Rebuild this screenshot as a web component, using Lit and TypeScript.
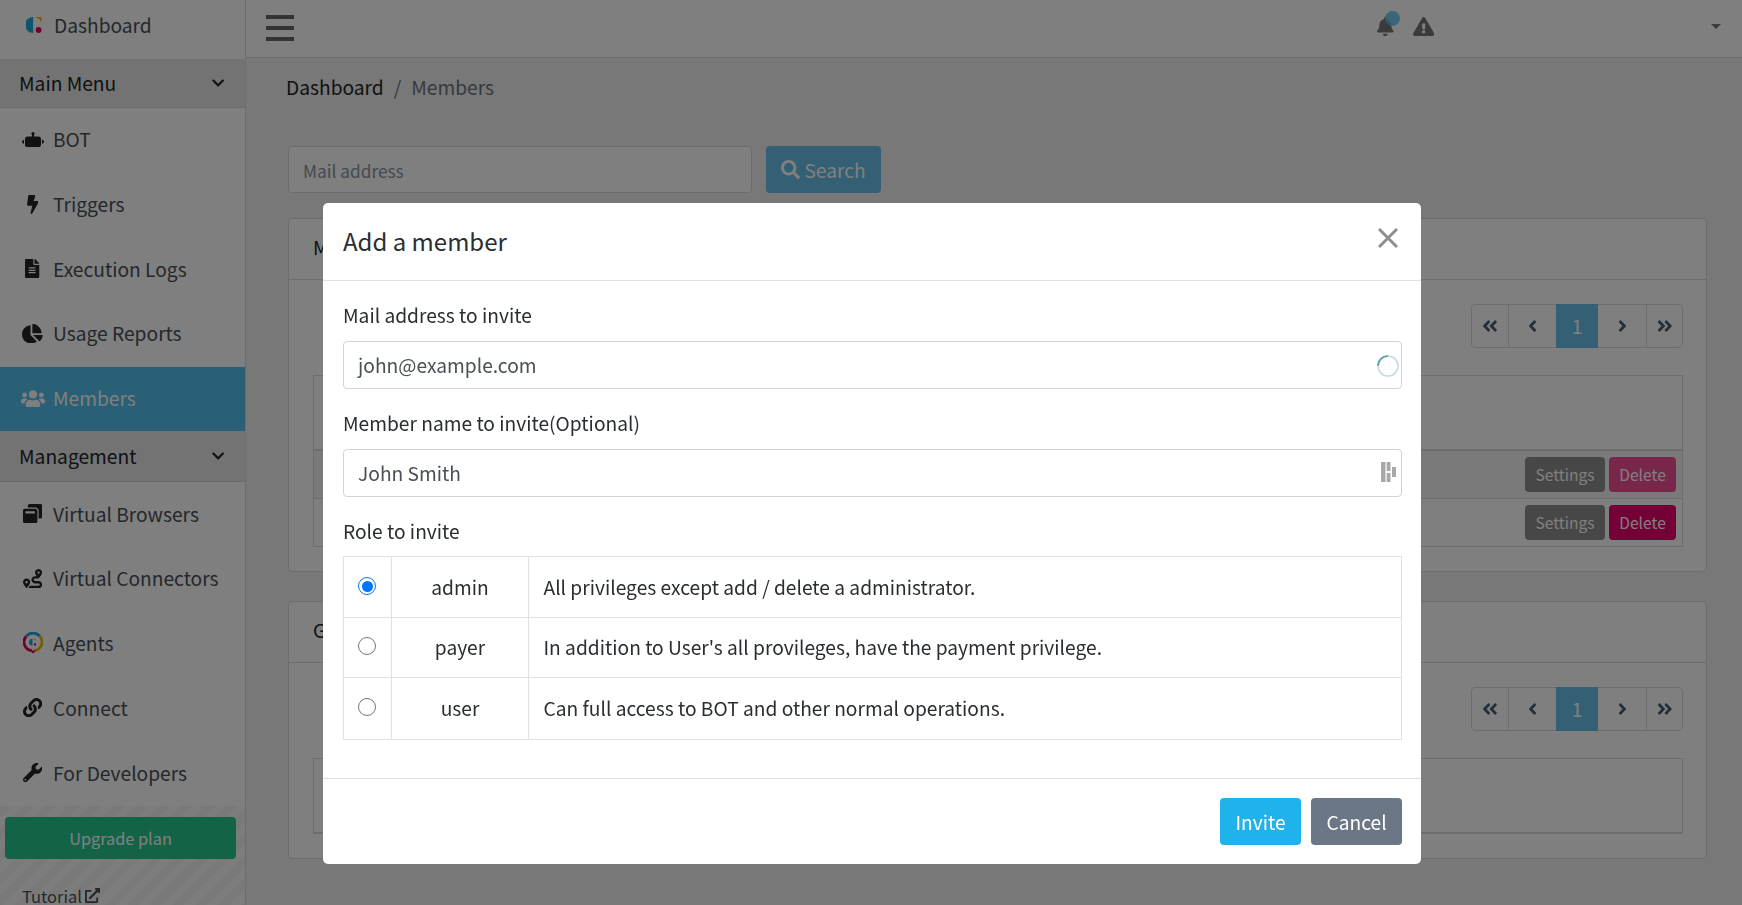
import { LitElement, html, css } from "lit";
import { customElement } from "lit/decorators.js";

const P: Record<string, [number, string]> = {
  chevron: [448, "M207.029 381.476L12.686 187.132c-9.373-9.373-9.373-24.569 0-33.941l22.667-22.667c9.357-9.357 24.522-9.375 33.901-.04L224 284.505l154.745-154.021c9.379-9.335 24.544-9.317 33.901.04l22.667 22.667c9.373 9.373 9.373 24.569 0 33.941L240.971 381.476c-9.373 9.372-24.569 9.372-33.942 0z"],
  bell: [448, "M224 512c35.32 0 63.97-28.65 63.97-64H160.03c0 35.35 28.65 64 63.97 64zm215.39-149.71c-19.32-20.76-55.47-51.99-55.47-154.29 0-77.7-54.48-139.9-127.94-155.16V32c0-17.67-14.32-32-31.98-32s-31.98 14.33-31.98 32v20.84C118.56 68.1 64.08 130.3 64.08 208c0 102.3-36.15 133.53-55.47 154.29-6 6.45-8.66 14.16-8.61 21.71.11 16.4 12.98 32 32.1 32h383.8c19.12 0 32-15.6 32.1-32 .05-7.55-2.61-15.27-8.61-21.71z"],
  warn: [576, "M569.517 440.013C587.975 472.007 564.806 512 527.94 512H48.054c-36.937 0-59.999-40.055-41.577-71.987L246.423 23.985c18.467-32.009 64.72-31.951 83.154 0l239.94 416.028zM288 354c-25.405 0-46 20.595-46 46s20.595 46 46 46 46-20.595 46-46-20.595-46-46-46zm-43.673-165.346l7.418 136c.347 6.364 5.609 11.346 11.982 11.346h48.546c6.373 0 11.635-4.982 11.982-11.346l7.418-136c.375-6.874-5.098-12.654-11.982-12.654h-63.383c-6.884 0-12.356 5.78-11.981 12.654z"],
  bolt: [320, "M296 160H180.6l42.6-129.8C227.2 15 215.7 0 200 0H56C44 0 33.8 8.9 32.2 20.8l-32 240C-1.7 275.2 9.5 288 24 288h118.7L96.6 482.5c-3.6 15.2 8 29.5 23.3 29.5 8.4 0 16.4-4.4 20.8-12l176-304c9.3-15.9-2.2-36-20.7-36z"],
  file: [384, "M224 136V0H24C10.7 0 0 10.7 0 24v464c0 13.3 10.7 24 24 24h336c13.3 0 24-10.7 24-24V160H248c-13.2 0-24-10.8-24-24zm64 236c0 6.6-5.4 12-12 12H108c-6.6 0-12-5.4-12-12v-8c0-6.6 5.4-12 12-12h168c6.6 0 12 5.4 12 12v8zm0-64c0 6.6-5.4 12-12 12H108c-6.6 0-12-5.4-12-12v-8c0-6.6 5.4-12 12-12h168c6.6 0 12 5.4 12 12v8zm0-72v8c0 6.6-5.4 12-12 12H108c-6.6 0-12-5.4-12-12v-8c0-6.6 5.4-12 12-12h168c6.6 0 12 5.4 12 12zm96-114.1v6.1H256V0h6.1c6.4 0 12.5 2.5 17 7l97.9 98c4.5 4.5 7 10.6 7 16.9z"],
  pie: [544, "M527.79 288H290.5l158.03 158.03c6.04 6.04 15.98 6.53 22.19.68 38.7-36.46 65.32-85.61 73.13-140.86 1.34-9.46-6.51-17.85-16.06-17.85zm-15.83-64.8C503.72 103.74 408.26 8.28 288.8.04 279.68-.59 272 7.1 272 16.24V240h223.77c9.14 0 16.82-7.68 16.19-16.8zM224 288V50.71c0-9.55-8.39-17.4-17.84-16.06C86.99 51.49-4.1 155.6.14 280.37 4.5 408.51 114.83 513.59 243.03 511.98c50.4-.63 96.97-16.87 135.26-44.03 7.9-5.6 8.42-17.23 1.57-24.08L224 288z"],
  users: [640, "M96 224c35.3 0 64-28.7 64-64s-28.7-64-64-64-64 28.7-64 64 28.7 64 64 64zm448 0c35.3 0 64-28.7 64-64s-28.7-64-64-64-64 28.7-64 64 28.7 64 64 64zm32 32h-64c-17.6 0-33.5 7.1-45.1 18.6 40.3 22.1 68.9 62 75.1 109.4h66c17.7 0 32-14.3 32-32v-32c0-35.3-28.7-64-64-64zm-256 0c61.9 0 112-50.1 112-112S381.9 32 320 32 208 82.1 208 144s50.1 112 112 112zm76.8 32h-8.3c-20.8 10-43.9 16-68.5 16s-47.6-6-68.5-16h-8.3C179.6 288 128 339.6 128 403.2V432c0 26.5 21.5 48 48 48h288c26.5 0 48-21.5 48-48v-28.8c0-63.6-51.6-115.2-115.2-115.2zm-223.7-13.4C161.5 263.1 145.6 256 128 256H64c-35.3 0-64 28.7-64 64v32c0 17.7 14.3 32 32 32h65.9c6.3-47.4 34.9-87.3 75.2-109.4z"],
  wrench: [512, "M507.73 109.1c-2.24-9.03-13.54-12.09-20.12-5.51l-74.36 74.36-67.88-11.31-11.31-67.88 74.36-74.36c6.62-6.62 3.43-17.9-5.66-20.16-47.38-11.74-99.55.91-136.58 37.93-39.64 39.64-50.55 97.1-34.05 147.2L18.74 402.76c-24.99 24.99-24.99 65.51 0 90.5 24.99 24.99 65.51 24.99 90.5 0l213.21-213.21c50.12 16.71 107.47 5.68 147.37-34.22 37.07-37.07 49.7-89.32 37.91-136.73zM64 472c-13.25 0-24-10.75-24-24 0-13.26 10.75-24 24-24s24 10.74 24 24c0 13.25-10.75 24-24 24z"],
  link: [512, "M326.612 185.391c59.747 59.809 58.927 155.698.36 214.59-.11.12-.24.25-.36.37l-67.2 67.2c-59.27 59.27-155.699 59.262-214.96 0-59.27-59.26-59.27-155.7 0-214.96l37.106-37.106c9.84-9.84 26.786-3.3 27.294 10.606.648 17.722 3.826 35.527 9.69 52.721 1.986 5.822.567 12.262-3.783 16.612l-13.087 13.087c-28.026 28.026-28.905 73.66-1.155 101.96 28.024 28.579 74.086 28.749 102.325.51l67.2-67.19c28.191-28.191 28.073-73.757 0-101.83-3.701-3.694-7.429-6.564-10.341-8.569a16.037 16.037 0 0 1-6.947-12.606c-.396-10.567 3.348-21.456 11.698-29.806l21.054-21.055c5.521-5.521 14.182-6.199 20.584-1.731a152.482 152.482 0 0 1 20.522 17.197zM467.547 44.449c-59.261-59.262-155.69-59.27-214.96 0l-67.2 67.2c-.12.12-.25.25-.36.37-58.566 58.892-59.387 154.781.36 214.59a152.454 152.454 0 0 0 20.521 17.196c6.402 4.468 15.064 3.789 20.584-1.731l21.054-21.055c8.35-8.35 12.094-19.239 11.698-29.806a16.037 16.037 0 0 0-6.947-12.606c-2.912-2.005-6.64-4.875-10.341-8.569-28.073-28.073-28.191-73.639 0-101.83l67.2-67.19c28.239-28.239 74.3-28.069 102.325.51 27.75 28.3 26.872 73.934-1.155 101.96l-13.087 13.087c-4.35 4.35-5.769 10.79-3.783 16.612 5.864 17.194 9.042 34.999 9.69 52.721.509 13.906 17.454 20.446 27.294 10.606l37.106-37.106c59.271-59.259 59.271-155.699.001-214.959z"],
  search: [512, "M505 442.7L405.3 343c-4.5-4.5-10.6-7-17-7H372c27.6-35.3 44-79.7 44-128C416 93.1 322.9 0 208 0S0 93.1 0 208s93.1 208 208 208c48.3 0 92.7-16.4 128-44v16.3c0 6.4 2.5 12.5 7 17l99.7 99.7c9.4 9.4 24.6 9.4 33.9 0l28.3-28.3c9.4-9.4 9.4-24.6.1-34zM208 336c-70.7 0-128-57.2-128-128 0-70.7 57.2-128 128-128 70.7 0 128 57.2 128 128 0 70.7-57.2 128-128 128z"],
  win: [512, "M512 48v288c0 26.5-21.5 48-48 48h-48V176c0-44.1-35.9-80-80-80H128V48c0-26.5 21.5-48 48-48h288c26.5 0 48 21.5 48 48zM384 176v288c0 26.5-21.5 48-48 48H48c-26.5 0-48-21.5-48-48V176c0-26.5 21.5-48 48-48h288c26.5 0 48 21.5 48 48zm-68 28c0-6.6-5.4-12-12-12H76c-6.6 0-12 5.4-12 12v52h252v-52z"],
  route: [512, "M416 320h-96c-17.6 0-32-14.4-32-32s14.4-32 32-32h96s96-107 96-160-43-96-96-96-96 43-96 96c0 25.5 22.2 63.4 45.3 96H320c-52.9 0-96 43.1-96 96s43.1 96 96 96h96c17.6 0 32 14.4 32 32s-14.4 32-32 32H185.5c-16 24.8-33.8 47.7-47.3 64H416c52.9 0 96-43.1 96-96s-43.1-96-96-96zm0-256c17.7 0 32 14.3 32 32s-14.3 32-32 32-32-14.3-32-32 14.3-32 32-32zM96 256c-53 0-96 43-96 96s96 160 96 160 96-107 96-160-43-96-96-96zm0 128c-17.7 0-32-14.3-32-32s14.3-32 32-32 32 14.3 32 32-14.3 32-32 32z"],
  ext: [512, "M432,320H400a16,16,0,0,0-16,16V448H64V128H208a16,16,0,0,0,16-16V80a16,16,0,0,0-16-16H48A48,48,0,0,0,0,112V464a48,48,0,0,0,48,48H400a48,48,0,0,0,48-48V336A16,16,0,0,0,432,320ZM488,0h-128c-21.37,0-32.05,25.91-17,41l35.73,35.73L135,320.37a24,24,0,0,0,0,34L157.67,377a24,24,0,0,0,34,0L435.28,133.32,471,169c15,15,41,4.5,41-17V24A24,24,0,0,0,488,0Z"],
  dbl: [448, "M223.7 239l136-136c9.4-9.4 24.6-9.4 33.9 0l22.6 22.6c9.4 9.4 9.4 24.6 0 33.9L319.9 256l96.4 96.4c9.4 9.4 9.4 24.6 0 33.9L393.7 409c-9.4 9.4-24.6 9.4-33.9 0l-136-136c-9.5-9.4-9.5-24.6-.1-34zm-192 34l136 136c9.4 9.4 24.6 9.4 33.9 0l22.6-22.6c9.4-9.4 9.4-24.6 0-33.9L127.9 256l96.4-96.4c9.4-9.4 9.4-24.6 0-33.9L201.7 103c-9.4-9.4-24.6-9.4-33.9 0l-136 136c-9.5 9.4-9.5 24.6-.1 34z"],
  left: [256, "M31.7 239l136-136c9.4-9.4 24.6-9.4 33.9 0l22.6 22.6c9.4 9.4 9.4 24.6 0 33.9L127.9 256l96.4 96.4c9.4 9.4 9.4 24.6 0 33.9L201.7 409c-9.4 9.4-24.6 9.4-33.9 0l-136-136c-9.5-9.4-9.5-24.6-.1-34z"],
};

const ico = (name: string, h: number, cls = "") => {
  const [w, d] = P[name];
  return html`<svg class="ico ${cls}" style="height:${h}px;width:${(h * w) / 512}px" viewBox="0 0 ${w} 512"><path d="${d}" fill="currentColor"></path></svg>`;
};

const logo = html`<svg class="logo" viewBox="0 0 16 16">
  <path d="M7.2 0a8 8 0 0 0 0 16z" fill="#1ca8dc"></path>
  <path d="M7.2 4.6L10.2 8 7.2 11.2z" fill="#fff"></path>
  <path d="M8.6 .1H15.4V6.6A8 8 0 0 0 8.6 .1z" fill="#f2b705"></path>
  <circle cx="12.6" cy="13" r="2.9" fill="#e0005f"></circle>
</svg>`;

const robot = html`<svg class="robot" viewBox="0 0 22 15" fill="currentColor">
  <circle cx="11" cy="1.6" r="1.6"></circle>
  <rect x="10" y="2" width="2" height="4"></rect>
  <rect x="3" y="4.6" width="16" height="10.4" rx="2.6"></rect>
  <path d="M2 7.5V12L0 10.4V9zM20 7.5V12L22 10.4V9z"></path>
</svg>`;

const agent = html`<svg class="agent" viewBox="0 0 20 22">
  <path d="M3.3 4.2A8.6 8.6 0 0 1 16.7 4.2" fill="none" stroke="#1ca8dc" stroke-width="2.8"></path>
  <path d="M16.7 4.2A8.6 8.6 0 0 1 11 18.6" fill="none" stroke="#f2b705" stroke-width="2.8"></path>
  <path d="M3.3 4.2A8.6 8.6 0 0 0 9 18.6" fill="none" stroke="#e0005f" stroke-width="2.8"></path>
  <path d="M7 18.6l3 3.2 3-3.2z" fill="#e0005f"></path>
  <path d="M9.5 6.8a3.4 3.4 0 0 0 0 6.8z" fill="#1ca8dc"></path>
  <circle cx="12" cy="12.4" r="1.2" fill="#e0005f"></circle>
  <path d="M10.8 6.8h2.2v2.2z" fill="#f2b705"></path>
</svg>`;

const item = (icon: unknown, label: string, active = false) =>
  html`<div class="item ${active ? "active" : ""}"><span class="ic">${icon}</span><span>${label}</span></div>`;

const pager = html`<div class="pager">
  <span class="pg first">${ico("dbl", 18)}</span>
  <span class="pg wide">${ico("left", 18)}</span>
  <span class="pg cur">1</span>
  <span class="pg wide">${ico("left", 18, "flip")}</span>
  <span class="pg last">${ico("dbl", 18, "flip")}</span>
</div>`;

@customElement("app-root")
export class AppRoot extends LitElement {
  static styles = css`
    :host { display: block; width: 1742px; height: 905px; overflow: hidden; position: relative;
      font-family: "Noto Sans CJK JP", "Noto Sans", sans-serif; font-size: 19.2px; font-weight: 400; color: #212529; background: #f0f0f0; }
    * { box-sizing: border-box; }
    .ico { display: block; flex: none; }
    .flip { transform: scaleX(-1); }
    .logo { width: 16px; height: 16px; display: block; flex: none; }
    .robot { width: 22px; height: 15px; display: block; }
    .agent { width: 20px; height: 22px; display: block; }
    .shell { display: flex; height: 905px; }

    .side { width: 246px; flex: none; background: #fff; border-right: 1px solid #d8dbe0; display: flex; flex-direction: column; height: 905px; color: #495057; }
    .brand { height: 59px; flex: none; display: flex; align-items: center; padding: 0 0 10px 26px; gap: 12px; }
    .group { height: 49px; flex: none; background: #e6e6e6; border-bottom: 1px solid #d8dbe0; color: #212529; display: flex; align-items: center; justify-content: space-between; padding: 0 21px 0 19px; }
    .group.m2 { height: 51px; }
    .item { height: 64.7px; flex: none; display: flex; align-items: center; padding-bottom: 2px; color: #495057; }
    .item .ic { width: 53px; padding-left: 14px; padding-right: 2px; display: flex; justify-content: center; color: #212529; flex: none; }
    .item.active { background: #52c0ea; color: #fff; }
    .item.active .ic { color: #fff; }
    .foot { flex: 1; min-height: 0; overflow: hidden; background: repeating-linear-gradient(135deg, #f2f2f2 0 8px, #fafafa 8px 16px); padding: 11px 9px 0 5px; display: flex; flex-direction: column; }
    .upgrade { height: 42px; flex: none; background: #26c98f; border-radius: 4px; color: #fff; display: flex; align-items: center; justify-content: center; font-size: 16.3px; }
    .tutorial { margin-top: 27px; flex: none; padding-left: 17px; display: flex; align-items: center; gap: 3px; font-size: 16.5px; color: #495057; line-height: 20px; }

    .main { flex: 1; min-width: 0; display: flex; flex-direction: column; }
    .top { height: 58px; background: #fff; border-bottom: 1px solid #d8dbe0; display: flex; align-items: center; padding: 0 21px 0 20px; }
    .burger { width: 28px; display: flex; flex-direction: column; gap: 7px; margin-bottom: 2px; }
    .burger i { display: block; height: 4px; background: #666; }
    .tools { margin-left: auto; display: flex; align-items: center; gap: 19px; color: #777; margin-bottom: 4px; }
    .bell { position: relative; }
    .dot { position: absolute; right: -6px; top: -6px; width: 15px; height: 15px; border-radius: 50%; background: #52c0ea; opacity: .8; }
    .caret { width: 0; height: 0; border: 5px solid transparent; border-top-color: #777; border-bottom: 0; margin-left: 258px; }
    .crumb { display: flex; gap: 10px; padding: 15px 0 0 40px; height: 88px; color: #6c757d; line-height: 28px; }
    .crumb b { font-weight: inherit; color: #212529; }
    .content { padding: 0 35px 0 42px; display: flex; flex-direction: column; }
    .searchrow { display: flex; gap: 14px; }
    .sinput { width: 464px; height: 47px; background: #fff; border: 1px solid #d8dbe0; border-radius: 4px; color: #8a93a2; font-size: 17.28px; display: flex; align-items: center; padding: 2px 0 0 14px; }
    .sbtn { width: 115px; height: 47px; background: #66c0e8; border-radius: 4px; color: #fff; display: flex; align-items: center; justify-content: center; gap: 4px; }
    .card { background: #fff; border: 1px solid #d8dbe0; border-radius: 4px; margin-top: 25px; }
    .card.second { margin-top: 29px; }
    .chead { height: 61px; border-bottom: 1px solid #d8dbe0; padding: 14px 0 0 24px; line-height: 28px; }
    .cbody { padding: 24px 23px 24px 24px; display: flex; flex-direction: column; }
    .pager { display: flex; align-self: flex-end; height: 44px; border: 1px solid #d8dbe0; border-radius: 4px; color: #4f5d73; }
    .pg { display: flex; align-items: center; justify-content: center; border-left: 1px solid #d8dbe0; }
    .pg.first { width: 36px; border-left: 0; }
    .pg.wide { width: 48px; }
    .pg.last { width: 36px; }
    .pg.cur { width: 42px; background: #66c0e8; color: #fff; border: 0; margin: -1px 0; }
    .pg.cur + .pg { border-left: 0; }
    .tbl { margin-top: 27px; border: 1px solid #d8dbe0; }
    .thead { height: 75px; border-bottom: 2px solid #d8dbe0; }
    .row { height: 47.5px; display: flex; justify-content: flex-end; align-items: center; gap: 4px; padding: 0 6px 0 0; border-bottom: 1px solid #d8dbe0; font-size: 15.6px; color: #fff; }
    .row:last-child { border-bottom: 0; }
    .row.hover { background: #f5f5f5; }
    .settings, .del { height: 35px; border-radius: 4px; display: flex; align-items: center; justify-content: center; }
    .settings { width: 80px; background: #8f8f8f; }
    .del { width: 67px; background: #e8006b; }
    .row.hover .del { background: #f24d97; }
    .tbl2 { height: 76px; border-bottom-width: 2px; }

    .scrim { position: fixed; inset: 0; background: rgba(0,0,0,.5); }
    .modal { position: fixed; left: 323px; top: 203px; width: 1098px; height: 661px; background: #fff; border-radius: 5px; display: flex; flex-direction: column; color: #2a2e33; }
    .mhead { height: 78px; border-bottom: 1px solid #dee2e6; display: flex; align-items: center; justify-content: space-between; padding: 0 23px 0 20px; }
    .mhead h5 { margin: -1px 0 0; font-size: 24px; font-weight: inherit; line-height: 1; }
    .close { width: 20px; height: 20px; margin-top: -8px; color: #8f8f8f; display: block; }
    .mbody { flex: 1; padding: 20px 19px 0 20px; display: flex; flex-direction: column; }
    .lbl { line-height: 28px; height: 28px; }
    .field { height: 48px; margin: 12px 0 20px; border: 1px solid #ced4da; border-radius: 4px; display: flex; align-items: center; padding: 0 0 0 14px; position: relative; color: #495057; }
    .spin { position: absolute; right: 2px; top: 13px; width: 22px; height: 22px; }
    .dash { position: absolute; right: 4px; top: 12px; width: 16px; height: 20px; }
    .roles { margin-top: 11px; border: 1px solid #dee2e6; display: grid; grid-template-columns: 47px 137px 1fr; }
    .roles > div { height: 60.6px; display: flex; align-items: center; border-bottom: 1px solid #dee2e6; border-left: 1px solid #dee2e6; }
    .roles > div:nth-child(3n+1) { border-left: 0; justify-content: center; align-items: flex-start; padding: 19.5px 2px 0 0; }
    .roles > div:nth-child(3n+2) { justify-content: center; }
    .roles > div:nth-child(3n) { padding-left: 14.5px; }
    .roles > div:nth-last-child(-n+3) { border-bottom: 0; }
    .radio { width: 18px; height: 18px; border-radius: 50%; border: 1px solid #767676; background: #fff; display: block; }
    .radio.on { border: 1.5px solid #0075ff; padding: 2.5px; background: content-box #0075ff; }
    .mfoot { height: 86px; border-top: 1px solid #dee2e6; display: flex; justify-content: flex-end; align-items: flex-start; gap: 10px; padding: 19px 19px 0 0; }
    .mfoot span { height: 47px; border-radius: 4px; color: #fff; display: flex; align-items: center; justify-content: center; }
    .invite { width: 81px; background: #20b2eb; }
    .cancel { width: 91px; background: #6b7785; }
  `;

  render() {
    return html`
      <div class="shell">
        <aside class="side">
          <div class="brand">${logo}<span>Dashboard</span></div>
          <div class="group"><span>Main Menu</span>${ico("chevron", 14)}</div>
          ${item(robot, "BOT")}
          ${item(ico("bolt", 19), "Triggers")}
          ${item(ico("file", 19), "Execution Logs")}
          ${item(ico("pie", 19.5), "Usage Reports")}
          ${item(ico("users", 19.2), "Members", true)}
          <div class="group m2"><span>Management</span>${ico("chevron", 14)}</div>
          ${item(ico("win", 19.2), "Virtual Browsers")}
          ${item(ico("route", 19.2), "Virtual Connectors")}
          ${item(agent, "Agents")}
          ${item(ico("link", 19.2), "Connect")}
          ${item(ico("wrench", 19.2), "For Developers")}
          <div class="foot">
            <div class="upgrade">Upgrade plan</div>
            <div class="tutorial"><span>Tutorial</span>${ico("ext", 15)}</div>
          </div>
        </aside>
        <div class="main">
          <header class="top">
            <div class="burger"><i></i><i></i><i></i></div>
            <div class="tools">
              <span class="bell">${ico("bell", 19)}<i class="dot"></i></span>
              ${ico("warn", 19)}
              <span class="caret"></span>
            </div>
          </header>
          <nav class="crumb"><b>Dashboard</b><span>/</span><span>Members</span></nav>
          <div class="content">
            <div class="searchrow">
              <div class="sinput">Mail address</div>
              <div class="sbtn">${ico("search", 19)}<span>Search</span></div>
            </div>
            <section class="card">
              <div class="chead">Members</div>
              <div class="cbody">
                ${pager}
                <div class="tbl">
                  <div class="thead"></div>
                  <div class="row hover"><span class="settings">Settings</span><span class="del">Delete</span></div>
                  <div class="row"><span class="settings">Settings</span><span class="del">Delete</span></div>
                </div>
              </div>
            </section>
            <section class="card second">
              <div class="chead">Groups</div>
              <div class="cbody">
                ${pager}
                <div class="tbl tbl2"></div>
              </div>
            </section>
          </div>
        </div>
      </div>
      <div class="scrim"></div>
      <div class="modal">
        <div class="mhead">
          <h5>Add a member</h5>
          <svg class="close" viewBox="0 0 20 20"><path d="M1 1l18 18M19 1L1 19" stroke="currentColor" stroke-width="3" fill="none"></path></svg>
        </div>
        <div class="mbody">
          <div class="lbl">Mail address to invite</div>
          <div class="field">john@example.com
            <svg class="spin" viewBox="0 0 22 22">
              <circle cx="11" cy="11" r="10" fill="none" stroke="#c3dde6" stroke-width="1.6"></circle>
              <path d="M11 1A10 10 0 0 0 1 11" fill="none" stroke="#5b9db3" stroke-width="1.6"></path>
            </svg>
          </div>
          <div class="lbl">Member name to invite(Optional)</div>
          <div class="field">John Smith
            <svg class="dash" viewBox="0 0 16 20" fill="#a8a8a8">
              <rect x="0" y="0" width="4.5" height="20"></rect>
              <rect x="5.7" y="0" width="3.8" height="9"></rect>
              <rect x="5.7" y="11" width="3.8" height="9"></rect>
              <rect x="11" y="5" width="4" height="10"></rect>
            </svg>
          </div>
          <div class="lbl">Role to invite</div>
          <div class="roles">
            <div><i class="radio on"></i></div><div>admin</div><div>All privileges except add / delete a administrator.</div>
            <div><i class="radio"></i></div><div>payer</div><div>In addition to User's all provileges, have the payment privilege.</div>
            <div><i class="radio"></i></div><div>user</div><div>Can full access to BOT and other normal operations.</div>
          </div>
        </div>
        <div class="mfoot"><span class="invite">Invite</span><span class="cancel">Cancel</span></div>
      </div>
    `;
  }
}
